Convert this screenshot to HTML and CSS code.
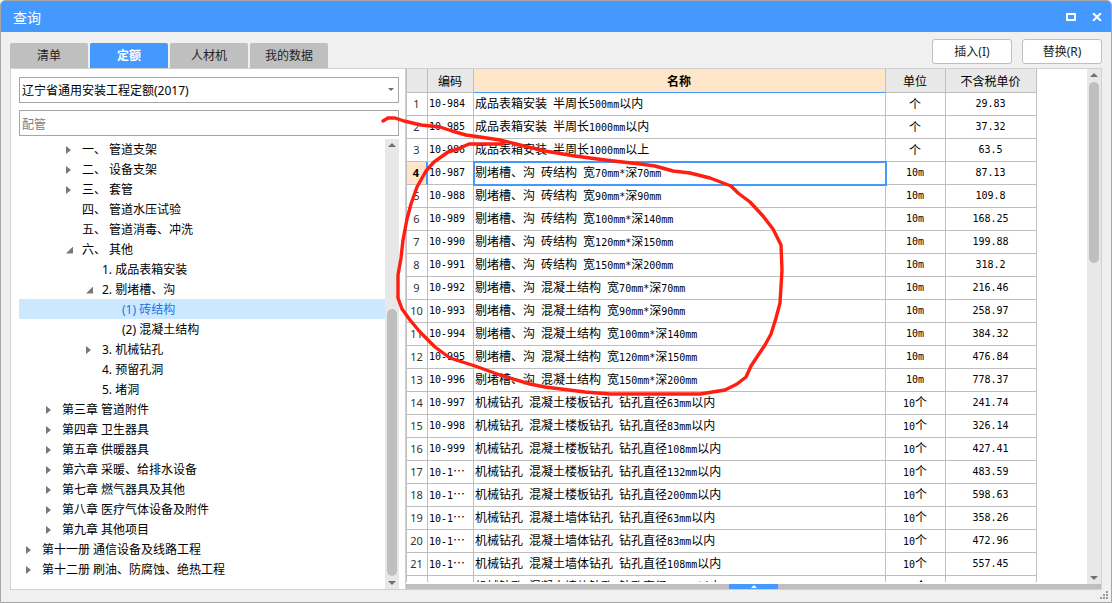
FILE: index.html
```html
<!DOCTYPE html>
<html lang="zh-CN">
<head>
<meta charset="utf-8">
<title>查询</title>
<link rel="stylesheet" href="styles.css">
</head>
<body>
<div class="window">
  <header class="titlebar">
    <h1 class="title">查询</h1>
    <div class="controls">
      <button class="control" type="button" aria-label="最大化"><svg width="10" height="8" viewBox="0 0 10 8"><path d="M1 1h8v6H1z" fill="none" stroke="#fff" stroke-width="2"/></svg></button>
      <button class="control" type="button" aria-label="关闭"><svg width="10" height="8" viewBox="0 0 10 8"><path d="M1 0l8 8M9 0L1 8" fill="none" stroke="#fff" stroke-width="2"/></svg></button>
    </div>
  </header>

  <div class="toolbar">
    <nav class="tabs" role="tablist">
      <button class="tab" type="button" role="tab">清单</button>
      <button class="tab active" type="button" role="tab" aria-selected="true">定额</button>
      <button class="tab" type="button" role="tab">人材机</button>
      <button class="tab" type="button" role="tab">我的数据</button>
    </nav>
    <div class="actions">
      <button class="action" type="button">插入(I)</button>
      <button class="action" type="button">替换(R)</button>
    </div>
  </div>

  <main class="panel">
    <section class="sidebar">
      <div class="combo">
        <select class="field" aria-label="定额库"><option>辽宁省通用安装工程定额(2017)</option></select>
        <svg class="combo-arrow" width="6" height="3" viewBox="0 0 6 3"><path d="M0 0h6L3 3z" fill="#6e6e6e"/></svg>
      </div>
      <input class="field" type="text" placeholder="配管" aria-label="搜索">
      <div class="tree-area">
        <ul class="tree" role="tree">
          <li class="node l3 closed">一、 管道支架</li>
          <li class="node l3 closed">二、 设备支架</li>
          <li class="node l3 closed">三、 套管</li>
          <li class="node l3">四、 管道水压试验</li>
          <li class="node l3">五、 管道消毒、冲洗</li>
          <li class="node l3 open">六、 其他</li>
          <li class="node l4">1. 成品表箱安装</li>
          <li class="node l4 open">2. 剔堵槽、沟</li>
          <li class="node l5 selected">(1) 砖结构</li>
          <li class="node l5">(2) 混凝土结构</li>
          <li class="node l4 closed">3. 机械钻孔</li>
          <li class="node l4">4. 预留孔洞</li>
          <li class="node l4">5. 堵洞</li>
          <li class="node l2 closed">第三章 管道附件</li>
          <li class="node l2 closed">第四章 卫生器具</li>
          <li class="node l2 closed">第五章 供暖器具</li>
          <li class="node l2 closed">第六章 采暖、给排水设备</li>
          <li class="node l2 closed">第七章 燃气器具及其他</li>
          <li class="node l2 closed">第八章 医疗气体设备及附件</li>
          <li class="node l2 closed">第九章 其他项目</li>
          <li class="node l1 closed">第十一册 通信设备及线路工程</li>
          <li class="node l1 closed">第十二册 刷油、防腐蚀、绝热工程</li>
        </ul>
        <div class="scrollbar">
          <span class="arrow up"></span>
          <div class="track tree-track"><div class="thumb"></div></div>
          <span class="arrow down"></span>
        </div>
      </div>
    </section>

    <section class="content">
      <div class="grid-area">
        <div class="grid-view">
          <table class="grid">
            <colgroup><col class="c-index"><col class="c-code"><col><col class="c-unit"><col class="c-price"></colgroup>
            <thead>
              <tr><th></th><th>编码</th><th class="current">名称</th><th>单位</th><th>不含税单价</th></tr>
            </thead>
            <tbody>
              <tr><th>1</th><td>10-984</td><td>成品表箱安装<span class="n"> </span>半周长<span class="n">500mm</span>以内</td><td class="han">个</td><td>29.83</td></tr>
              <tr><th>2</th><td>10-985</td><td>成品表箱安装<span class="n"> </span>半周长<span class="n">1000mm</span>以内</td><td class="han">个</td><td>37.32</td></tr>
              <tr><th>3</th><td>10-986</td><td>成品表箱安装<span class="n"> </span>半周长<span class="n">1000mm</span>以上</td><td class="han">个</td><td>63.5</td></tr>
              <tr class="active-row"><th>4</th><td>10-987</td><td>剔堵槽、沟<span class="n"> </span>砖结构<span class="n"> </span>宽<span class="n">70mm*</span>深<span class="n">70mm</span></td><td>10m</td><td>87.13</td></tr>
              <tr><th>5</th><td>10-988</td><td>剔堵槽、沟<span class="n"> </span>砖结构<span class="n"> </span>宽<span class="n">90mm*</span>深<span class="n">90mm</span></td><td>10m</td><td>109.8</td></tr>
              <tr><th>6</th><td>10-989</td><td>剔堵槽、沟<span class="n"> </span>砖结构<span class="n"> </span>宽<span class="n">100mm*</span>深<span class="n">140mm</span></td><td>10m</td><td>168.25</td></tr>
              <tr><th>7</th><td>10-990</td><td>剔堵槽、沟<span class="n"> </span>砖结构<span class="n"> </span>宽<span class="n">120mm*</span>深<span class="n">150mm</span></td><td>10m</td><td>199.88</td></tr>
              <tr><th>8</th><td>10-991</td><td>剔堵槽、沟<span class="n"> </span>砖结构<span class="n"> </span>宽<span class="n">150mm*</span>深<span class="n">200mm</span></td><td>10m</td><td>318.2</td></tr>
              <tr><th>9</th><td>10-992</td><td>剔堵槽、沟<span class="n"> </span>混凝土结构<span class="n"> </span>宽<span class="n">70mm*</span>深<span class="n">70mm</span></td><td>10m</td><td>216.46</td></tr>
              <tr><th>10</th><td>10-993</td><td>剔堵槽、沟<span class="n"> </span>混凝土结构<span class="n"> </span>宽<span class="n">90mm*</span>深<span class="n">90mm</span></td><td>10m</td><td>258.97</td></tr>
              <tr><th>11</th><td>10-994</td><td>剔堵槽、沟<span class="n"> </span>混凝土结构<span class="n"> </span>宽<span class="n">100mm*</span>深<span class="n">140mm</span></td><td>10m</td><td>384.32</td></tr>
              <tr><th>12</th><td>10-995</td><td>剔堵槽、沟<span class="n"> </span>混凝土结构<span class="n"> </span>宽<span class="n">120mm*</span>深<span class="n">150mm</span></td><td>10m</td><td>476.84</td></tr>
              <tr><th>13</th><td>10-996</td><td>剔堵槽、沟<span class="n"> </span>混凝土结构<span class="n"> </span>宽<span class="n">150mm*</span>深<span class="n">200mm</span></td><td>10m</td><td>778.37</td></tr>
              <tr><th>14</th><td>10-997</td><td>机械钻孔<span class="n"> </span>混凝土楼板钻孔<span class="n"> </span>钻孔直径<span class="n">63mm</span>以内</td><td class="han"><span class="n">10</span>个</td><td>241.74</td></tr>
              <tr><th>15</th><td>10-998</td><td>机械钻孔<span class="n"> </span>混凝土楼板钻孔<span class="n"> </span>钻孔直径<span class="n">83mm</span>以内</td><td class="han"><span class="n">10</span>个</td><td>326.14</td></tr>
              <tr><th>16</th><td>10-999</td><td>机械钻孔<span class="n"> </span>混凝土楼板钻孔<span class="n"> </span>钻孔直径<span class="n">108mm</span>以内</td><td class="han"><span class="n">10</span>个</td><td>427.41</td></tr>
              <tr><th>17</th><td>10-1<span class="more">…</span></td><td>机械钻孔<span class="n"> </span>混凝土楼板钻孔<span class="n"> </span>钻孔直径<span class="n">132mm</span>以内</td><td class="han"><span class="n">10</span>个</td><td>483.59</td></tr>
              <tr><th>18</th><td>10-1<span class="more">…</span></td><td>机械钻孔<span class="n"> </span>混凝土楼板钻孔<span class="n"> </span>钻孔直径<span class="n">200mm</span>以内</td><td class="han"><span class="n">10</span>个</td><td>598.63</td></tr>
              <tr><th>19</th><td>10-1<span class="more">…</span></td><td>机械钻孔<span class="n"> </span>混凝土墙体钻孔<span class="n"> </span>钻孔直径<span class="n">63mm</span>以内</td><td class="han"><span class="n">10</span>个</td><td>358.26</td></tr>
              <tr><th>20</th><td>10-1<span class="more">…</span></td><td>机械钻孔<span class="n"> </span>混凝土墙体钻孔<span class="n"> </span>钻孔直径<span class="n">83mm</span>以内</td><td class="han"><span class="n">10</span>个</td><td>472.96</td></tr>
              <tr><th>21</th><td>10-1<span class="more">…</span></td><td>机械钻孔<span class="n"> </span>混凝土墙体钻孔<span class="n"> </span>钻孔直径<span class="n">108mm</span>以内</td><td class="han"><span class="n">10</span>个</td><td>557.45</td></tr>
              <tr><th></th><td></td><td>机械钻孔<span class="n"> </span>混凝土墙体钻孔<span class="n"> </span>钻孔直径<span class="n">132mm</span>以内</td><td class="han"><span class="n">10</span>个</td><td></td></tr>
            </tbody>
          </table>
        </div>
        <div class="scrollbar">
          <span class="arrow up"></span>
          <div class="track"><div class="thumb"></div></div>
          <span class="arrow down"></span>
        </div>
      </div>
      <div class="splitter">
        <button class="expander" type="button" aria-label="展开"><svg width="6" height="3" viewBox="0 0 6 3"><path d="M0 3h6L3 0z" fill="#fff"/></svg></button>
      </div>
    </section>
  </main>

  <footer class="statusbar">
    <svg width="8" height="8" viewBox="0 0 8 8" fill="#9a9a9a"><path d="M6 0h2v2H6zM3 3h2v2H3zM6 3h2v2H6zM0 6h2v2H0zM3 6h2v2H3zM6 6h2v2H6z"/></svg>
  </footer>

  <svg class="ink" width="1112" height="603" viewBox="0 0 1112 603" fill="none" stroke="#ff1e10" stroke-width="3.4" stroke-linecap="round" stroke-linejoin="round">
    <path d="M383 121L388 118L395 118L404 121L421 125L440 127L452 131L466 135L480 137L500 140L520 145L545 151L575 156L605 160L640 164L655 166L673 171L690 173L710 178L731 186L738 193L750 202L763 216L773 229L781 245L782 270L780 303L776 318L771 334L765 345L751 366L746 377L737 384L725 390L700 394L610 394L585 392L545 387L530 384L500 375L475 366L450 358L435 347L420 332L410 320L402 309L398 298L398 275L401 258L403 240L407 219L411 204L417 187L426 171L434 162L448 152L458 149L469 144L503 144"/>
  </svg>
</div>
</body>
</html>
```
FILE: styles.css
```css
* {
  box-sizing: border-box;
}

body {
  margin: 0;
  background: #fff;
  color: #000;
  font: 12px/20px "Noto Sans", "Noto Sans CJK SC", sans-serif;
}

button,
input,
select {
  margin: 0;
  font: inherit;
  color: inherit;
}

.window {
  position: relative;
  display: flex;
  flex-direction: column;
  height: 100vh;
  overflow: hidden;
  border: 1px solid #a6a6a6;
  border-radius: 5px 5px 0 0;
  background: #f0f0f0;
}

.titlebar {
  display: flex;
  flex: none;
  align-items: center;
  justify-content: space-between;
  height: 31px;
  padding: 0 9px 0 12px;
  background: #4499ff;
  color: #fff;
}

.title {
  margin: 0;
  padding-top: 2px;
  font-size: 14px;
  font-weight: 400;
}

.controls {
  display: flex;
  gap: 16px;
}

.control {
  display: flex;
  padding: 0;
  border: 0;
  background: none;
}

.toolbar {
  display: flex;
  flex: none;
  align-items: flex-end;
  justify-content: space-between;
  height: 36px;
  padding: 0 9px;
}

.tabs {
  display: flex;
  gap: 2px;
}

.tab {
  width: 78px;
  height: 25px;
  padding: 0;
  border: 0;
  border-radius: 2px 2px 0 0;
  background: #bfbfbf;
  color: #222;
}

.tab.active {
  background: #4499ff;
  color: #fff;
  font-weight: 700;
}

.actions {
  display: flex;
  gap: 10px;
  padding-bottom: 4px;
}

.action {
  width: 80px;
  height: 25px;
  padding: 0;
  border: 1px solid #bfbfbf;
  border-radius: 3px;
  background: #fff;
  color: #222;
}

.panel {
  display: flex;
  flex: 1;
  min-height: 0;
  margin: 0 9px;
  border: 1px solid #d0d0d0;
  background: #fff;
}

.sidebar {
  display: flex;
  flex: none;
  flex-direction: column;
  width: 395px;
  padding: 8px 6px 0 8px;
  border-right: 1px solid #d0d0d0;
}

.combo {
  position: relative;
  margin-bottom: 7px;
}

.field {
  display: block;
  width: 100%;
  height: 26px;
  padding: 2px 2px 0;
  border: 1px solid #a6a6a6;
  border-radius: 0;
  background: #fff;
  appearance: none;
}

.field::placeholder {
  color: #808080;
}

.combo-arrow {
  position: absolute;
  top: 11px;
  right: 5px;
}

.tree-area {
  display: flex;
  flex: 1;
  min-height: 0;
  margin-top: 3px;
}

.tree {
  flex: 1;
  margin: 0;
  padding: 0;
  overflow: hidden;
  list-style: none;
}

.node {
  display: flex;
  align-items: center;
  height: 20px;
  line-height: 22px;
  white-space: pre;
}

.node::before {
  content: "";
  flex: none;
  width: 5px;
  height: 8px;
  margin-right: 11px;
}

.closed::before {
  background: #787878;
  clip-path: polygon(0 0, 100% 50%, 0 100%);
}

.open::before {
  width: 7px;
  height: 7px;
  margin-right: 9px;
  background: #787878;
  clip-path: polygon(100% 0, 100% 100%, 0 100%);
}

.node {
  padding-top: 2px;
}

.l1 { padding-left: 7px; }
.l2 { padding-left: 27px; }
.l3 { padding-left: 47px; }
.l4 { padding-left: 67px; }
.l5 { padding-left: 87px; }

.selected {
  background: #cce8ff;
  color: #1a73e8;
}

.scrollbar {
  display: flex;
  flex: none;
  flex-direction: column;
  align-items: center;
  width: 14px;
  padding: 4px 0;
  background: #e8e8e8;
}

.arrow {
  width: 8px;
  height: 4px;
  background: #6e6e78;
}

.up {
  clip-path: polygon(50% 0, 100% 100%, 0 100%);
}

.down {
  clip-path: polygon(0 0, 100% 0, 50% 100%);
}

.track {
  flex: 1;
  width: 10px;
  padding: 5px 0;
}

.thumb {
  height: 37%;
  border-radius: 5px;
  background: #bfbfbf;
}

.tree-track {
  display: flex;
  flex-direction: column;
  justify-content: flex-end;
}

.tree-track .thumb {
  height: 63%;
}

.content {
  display: flex;
  flex: 1;
  flex-direction: column;
  min-width: 0;
}

.grid-area {
  display: flex;
  flex: 1;
  min-height: 0;
}

.grid-view {
  flex: 1;
  min-width: 0;
  margin-bottom: 2px;
  padding-right: 50px;
  overflow: hidden;
}

.grid {
  width: 100%;
  border-spacing: 0;
  border-left: 1px solid #bfbfbf;
  table-layout: fixed;
}

.c-index { width: 21px; }
.c-code { width: 46px; }
.c-unit { width: 60px; }
.c-price { width: 91px; }

.grid th,
.grid td {
  height: 23px;
  padding: 0 2px 0 1px;
  border-right: 1px solid #bfbfbf;
  border-bottom: 1px solid #bfbfbf;
  font: 10px/20px "DejaVu Sans Mono", "Noto Sans CJK SC", monospace;
  text-align: center;
  white-space: nowrap;
  overflow: hidden;
}

.grid thead th {
  height: 24px;
  background: #e8e8e8;
  font: 12px/20px "Noto Sans CJK SC", sans-serif;
}

.grid thead .current {
  border-bottom-color: #4499ff;
  background: #ffe6c8;
  font-weight: 700;
}

.grid tbody th {
  padding: 0 1px 0 0;
  color: #333;
  font: 11px/20px "Noto Sans", sans-serif;
}

.grid td:nth-child(2) {
  text-align: left;
}

.grid td:nth-child(3) {
  font: 12px/20px "Noto Sans CJK SC", sans-serif;
  text-align: left;
}

.grid td.han {
  font: 12px/20px "Noto Sans CJK SC", sans-serif;
}

.n {
  font: 10px/20px "DejaVu Sans Mono", monospace;
  white-space: pre;
}

.more {
  font: 12px/20px "Noto Sans CJK SC", sans-serif;
}

.grid .active-row th {
  border-right: 2px solid #4499ff;
  background: #ffe6c8;
  color: #000;
  font-weight: 700;
}

.grid .active-row td:nth-child(3) {
  outline: 2px solid #4499ff;
  outline-offset: -1px;
}

.splitter {
  display: flex;
  flex: none;
  justify-content: center;
  height: 5px;
  background: #bfbfbf;
}

.expander {
  display: flex;
  align-items: center;
  justify-content: center;
  width: 49px;
  height: 5px;
  padding: 0;
  border: 0;
  background: #4499ff;
}

.statusbar {
  display: flex;
  flex: none;
  align-items: flex-end;
  justify-content: flex-end;
  height: 12px;
  padding: 0 3px 3px 0;
}

.ink {
  position: absolute;
  top: -1px;
  left: -1px;
  pointer-events: none;
}
```
